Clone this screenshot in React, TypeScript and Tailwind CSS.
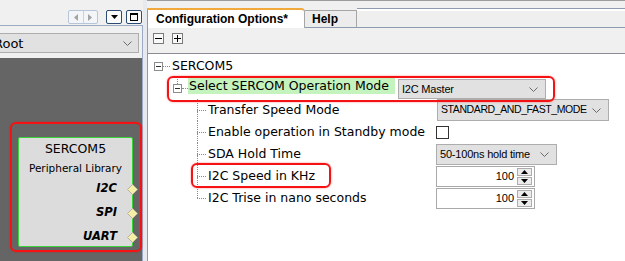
import type { ReactNode } from "react";

function Chevron() {
    return (
        <svg width="9" height="5" viewBox="0 0 9 5" className="shrink-0">
            <polyline points="0.5,0.5 4.5,4.5 8.5,0.5" fill="none" stroke="#6b6b6b" strokeWidth="1" />
        </svg>
    );
}

function Combo({ value, className, textClass = "text-[11px] tracking-[-0.2px]" }: { value: string; className: string; textClass?: string }) {
    return (
        <div className={`flex shrink-0 items-center justify-between border border-[#adadad] bg-[#e1e1e1] pl-[3px] pr-[7px] ${className}`}>
            <span className={`whitespace-nowrap font-['Liberation_Sans',sans-serif] text-black ${textClass}`}>{value}</span>
            <Chevron />
        </div>
    );
}

function Arrow({ up }: { up?: boolean }) {
    return (
        <svg width="7" height="4" viewBox="0 0 7 4">
            <polygon points={up ? "3.5,0 7,4 0,4" : "0,0 7,0 3.5,4"} fill="#000" />
        </svg>
    );
}

function Spinner({ value }: { value: string }) {
    return (
        <div className="flex h-[21px] w-[99px] shrink-0 border border-[#a9a9a9] bg-white">
            <span className="flex-1 pr-[3px] text-right font-['Liberation_Sans',sans-serif] text-[11px] leading-[19px]">{value}</span>
            <div className="my-[1px] mr-[2px] flex w-[15px] flex-col gap-[1px]">
                <div className="flex flex-1 items-center justify-center border border-[#adadad] bg-[#ececec]"><Arrow up /></div>
                <div className="flex flex-1 items-center justify-center border border-[#adadad] bg-[#ececec]"><Arrow /></div>
            </div>
        </div>
    );
}

function ExpandBox() {
    return (
        <div className="flex h-[9px] w-[9px] shrink-0 items-center justify-center border border-[#8c8c8c] bg-white">
            <div className="h-px w-[5px] bg-[#303030]" />
        </div>
    );
}

function Branch({ last }: { last?: boolean }) {
    return (
        <div className="ml-[49px] flex h-full w-[9px] shrink-0 flex-col">
            <div className="flex-1 border-l border-dotted border-[#8a8a8a]" />
            <div className="h-0 border-t border-dotted border-[#8a8a8a]" />
            <div className={`flex-1 ${last ? "" : "border-l border-dotted border-[#8a8a8a]"}`} />
        </div>
    );
}

function ChildRow({ label, last, children }: { label: string; last?: boolean; children: ReactNode }) {
    return (
        <div className="flex h-[22px] items-center">
            <Branch last={last} />
            <span className="ml-[2px] w-[228px] shrink-0 whitespace-nowrap text-[12.5px]">{label}</span>
            {children}
        </div>
    );
}

function Port({ name }: { name: string }) {
    return (
        <div className="flex h-[24px] items-center justify-end">
            <span className="text-[11.5px] font-bold italic">{name}</span>
            <svg width="11" height="11" viewBox="0 0 11 11" className="-mr-[6px] ml-[10px] shrink-0">
                <polygon points="5.5,0.5 10.5,5.5 5.5,10.5 0.5,5.5" fill="#f7efa6" stroke="#b5b39a" />
            </svg>
        </div>
    );
}

function LeftPanel() {
    return (
        <div className="flex w-[143px] shrink-0 flex-col">
            <div className="flex h-[25px] items-start justify-end pr-[1px] pt-[10px]">
                <div className="flex h-[14px] w-[30px] rounded-[2px] border border-[#b7c5d8] bg-[#f3f5f8]">
                    <div className="flex flex-1 items-center justify-center border-r border-[#c9d3e0]">
                        <svg width="4" height="7" viewBox="0 0 4 7"><polygon points="4,0 4,7 0,3.5" fill="#a3a3a3" /></svg>
                    </div>
                    <div className="flex flex-1 items-center justify-center">
                        <svg width="4" height="7" viewBox="0 0 4 7"><polygon points="0,0 4,3.5 0,7" fill="#a3a3a3" /></svg>
                    </div>
                </div>
                <div className="ml-[8px] flex h-[14px] w-[16px] items-center justify-center rounded-[2px] border border-[#2c4a73] bg-[#fafafa]">
                    <svg width="7" height="4" viewBox="0 0 7 4"><polygon points="0,0 7,0 3.5,4" fill="#000" /></svg>
                </div>
                <div className="ml-[4px] flex h-[14px] w-[16px] items-center justify-center rounded-[2px] border border-[#2c4a73] bg-[#fafafa]">
                    <div className="h-[8px] w-[8px] border border-t-2 border-black" />
                </div>
            </div>
            <div className="flex flex-1 flex-col border-r border-t border-[#9aabc3]">
                <div className="h-[32px] pt-[7px]">
                    <div className="-ml-[7px] flex h-[20px] w-[146px] items-center justify-between border border-[#adadad] bg-[#e1e1e1] pr-[6px]">
                        <span className="text-[13px] leading-none">Root</span>
                        <Chevron />
                    </div>
                </div>
                <div className="relative flex-1 bg-[#656565]">
                    <div className="absolute left-[10px] top-[64px] h-[130px] w-[132px] rounded-[6px] border-2 border-[#f41212] shadow-[0_0_2px_rgba(255,0,0,0.5)]" />
                    <div className="absolute left-[18px] top-[79px] flex h-[110px] w-[115px] flex-col rounded-[2px] border border-[#38d438] bg-[#dcdcdc] pr-[14px]">
                        <span className="mt-[1px] -mr-[14px] text-center text-[12.5px] leading-[20px]">SERCOM5</span>
                        <span className="-mr-[14px] text-center text-[10.5px] leading-[18px]">Peripheral Library</span>
                        <div className="-mr-[14px] flex flex-col">
                            <Port name="I2C" />
                            <Port name="SPI" />
                            <Port name="UART" />
                        </div>
                    </div>
                </div>
            </div>
        </div>
    );
}

function RightPanel() {
    return (
        <div className="flex w-[478px] shrink-0 flex-col border-t border-[#9c9c9c]">
            <div className="h-[7px]" />
            <div className="flex h-[20px]">
                <div className="flex w-[158px] items-center rounded-tr-[4px] border-l border-r border-t-2 border-l-[#8c9bb0] border-r-[#a6a6a6] border-t-[#f2a93b] bg-white pl-[8px]">
                    <span className="font-['Liberation_Sans',sans-serif] text-[12px] font-bold">Configuration Options*</span>
                </div>
                <div className="mt-[2px] flex w-[52px] items-center border-b border-r border-t border-b-[#8c9bb0] border-r-[#a6a6a6] border-t-[#a6a6a6] bg-[#ececec] pl-[7px]">
                    <span className="font-['Liberation_Sans',sans-serif] text-[12px] font-bold">Help</span>
                </div>
                <div className="flex-1 border-b border-t border-[#8c9bb0] bg-[#efefef] shadow-[inset_0_2px_0_#ffffff]" />
            </div>
            <div className="flex h-[26px] gap-[8px] border-b border-l border-b-[#8a8d94] border-l-[#8c9bb0] bg-[#f0f0f0] pl-[5px] pt-[5px]">
                <div className="flex h-[11px] w-[11px] items-center justify-center border border-[#7a7a7a] bg-[#f8f8f8]">
                    <div className="h-px w-[7px] bg-black" />
                </div>
                <div className="relative flex h-[11px] w-[11px] items-center justify-center border border-[#7a7a7a] bg-[#f8f8f8]">
                    <div className="h-px w-[7px] bg-black" />
                    <div className="absolute h-[7px] w-px bg-black" />
                </div>
            </div>
            <div className="relative flex-1 border-l border-[#8c9bb0] bg-white pt-px">
                <div className="flex h-[22px] items-center">
                    <div className="ml-[6px]"><ExpandBox /></div>
                    <div className="w-[7px] border-t border-dotted border-[#8a8a8a]" />
                    <span className="ml-[2px] text-[12.5px]">SERCOM5</span>
                </div>
                <div className="flex h-[22px] items-start">
                    <div className="ml-[25px] flex w-[9px] flex-col items-center">
                        <div className="h-[7px] border-l border-dotted border-[#8a8a8a]" />
                        <ExpandBox />
                    </div>
                    <div className="mt-[11px] w-[6px] border-t border-dotted border-[#8a8a8a]" />
                    <span className="mt-px flex h-[16px] w-[207px] items-center bg-[#c5f3bd] pl-px text-[12.5px]">Select SERCOM Operation Mode</span>
                    <Combo value="I2C Master" className="ml-[3px] mt-[2px] h-[20px] w-[148px]" />
                </div>
                <ChildRow label="Transfer Speed Mode">
                    <Combo value="STANDARD_AND_FAST_MODE" className="ml-px h-[22px] w-[172px]" textClass="text-[10.5px] tracking-[-0.4px]" />
                </ChildRow>
                <ChildRow label="Enable operation in Standby mode">
                    <div className="h-[13px] w-[13px] border border-[#333333] bg-white" />
                </ChildRow>
                <ChildRow label="SDA Hold Time">
                    <Combo value="50-100ns hold time" className="h-[21px] w-[121px]" />
                </ChildRow>
                <ChildRow label="I2C Speed in KHz">
                    <Spinner value="100" />
                </ChildRow>
                <ChildRow label="I2C Trise in nano seconds" last>
                    <Spinner value="100" />
                </ChildRow>
                <div className="absolute left-[19px] top-[22px] h-[26px] w-[388px] rounded-[6px] border-2 border-[#f41212] shadow-[0_0_2px_rgba(255,0,0,0.5)]" />
                <div className="absolute left-[43px] top-[109px] h-[25px] w-[140px] rounded-[6px] border-2 border-[#f41212] shadow-[0_0_2px_rgba(255,0,0,0.5)]" />
            </div>
        </div>
    );
}

export default function App() {
    return (
        <div className="flex h-[261px] w-[625px] overflow-hidden bg-[#f0f0f0] font-['DejaVu_Sans',sans-serif] text-black">
            <LeftPanel />
            <div className="w-[4px] shrink-0 bg-[#e6e9ee]" />
            <RightPanel />
        </div>
    );
}
